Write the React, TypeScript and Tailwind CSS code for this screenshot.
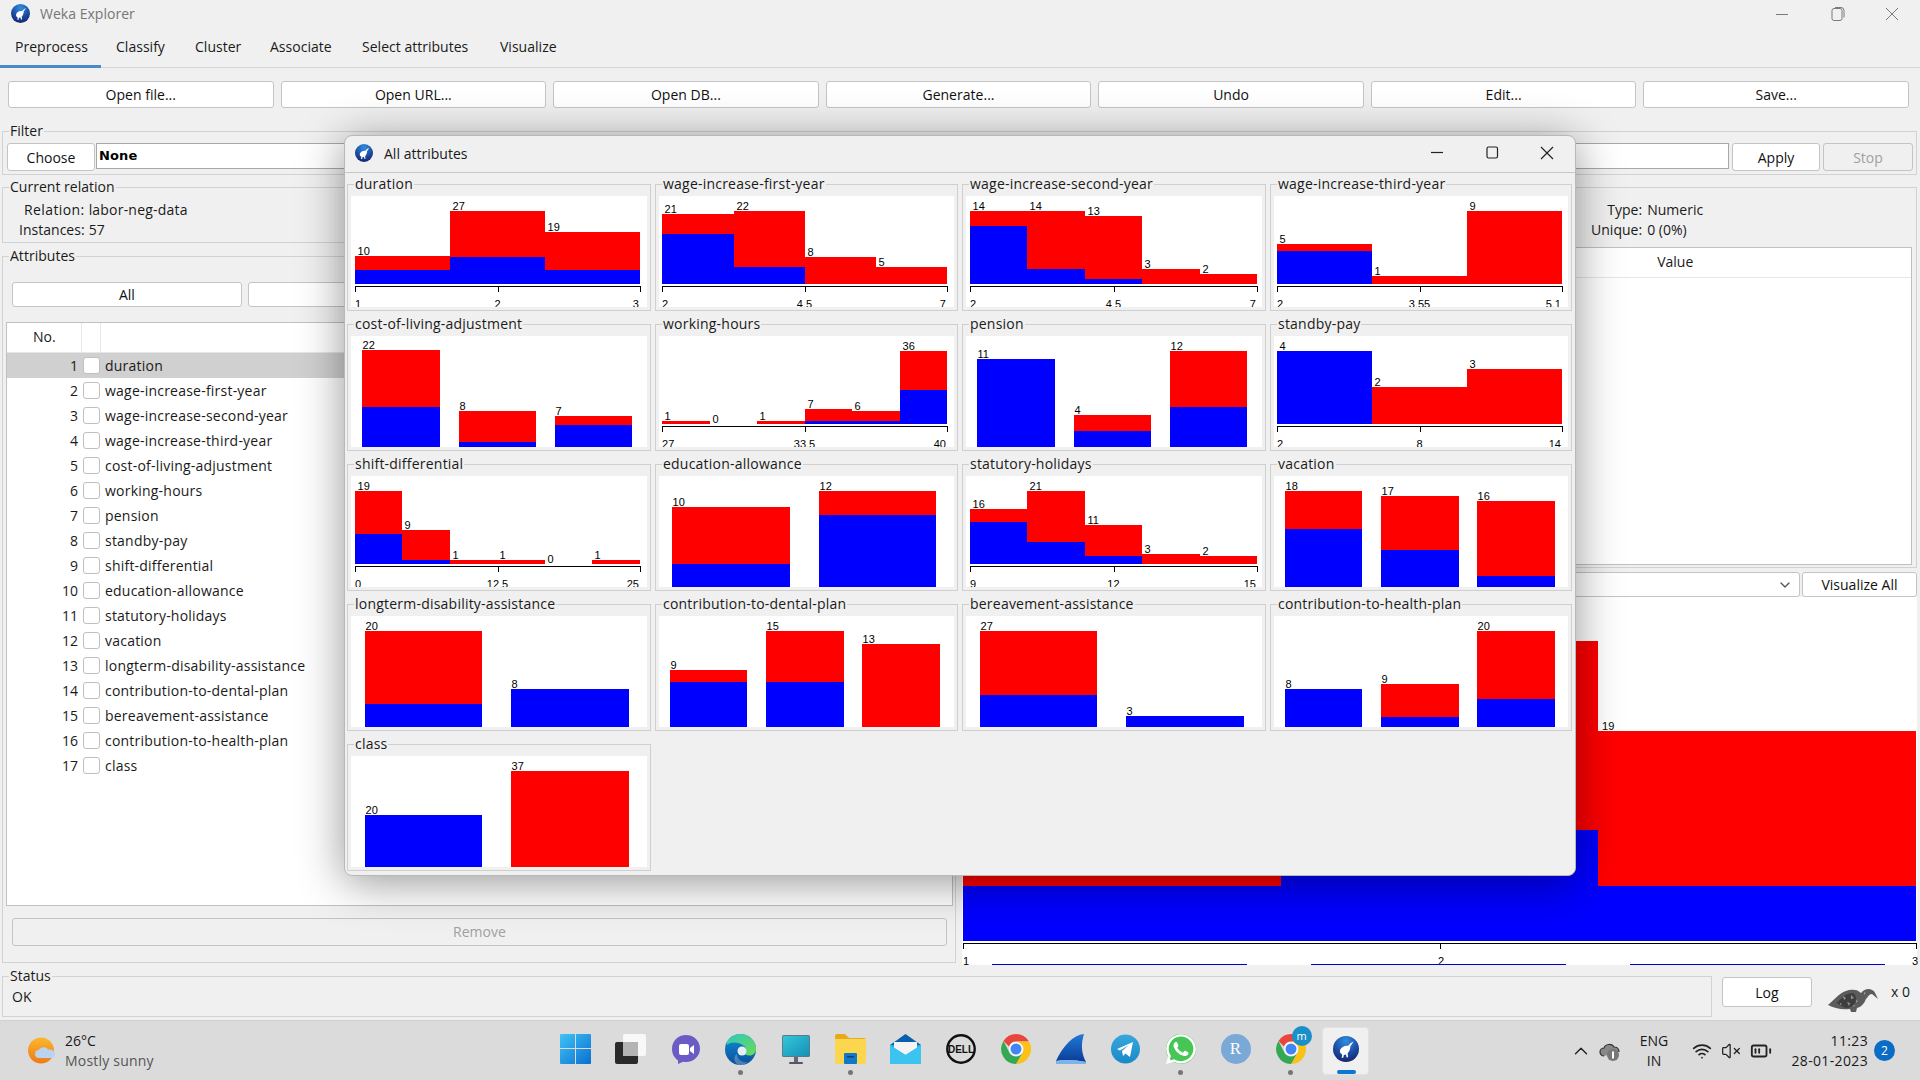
import React from "react";
import { ChevronDown, ChevronUp, Wifi, VolumeX, BatteryMedium } from "lucide-react";
import { FaWhatsapp } from "react-icons/fa";

type Bar = [number, number, number, number | null, string];
type Plot = { name: string; bars: Bar[]; numeric?: string[] };

const plots: Plot[] = [
  { name: "duration", numeric: ["1", "2", "3"], bars: [[4, 99, 60, 74, "10"], [99, 194, 15, 61, "27"], [194, 289, 36, 74, "19"]] },
  { name: "wage-increase-first-year", numeric: ["2", "4.5", "7"], bars: [[3, 75, 18, 38, "21"], [75, 146, 15, 71, "22"], [146, 217, 61, null, "8"], [217, 288, 71, null, "5"]] },
  { name: "wage-increase-second-year", numeric: ["2", "4.5", "7"], bars: [[4, 61, 15, 30, "14"], [61, 119, 15, 73, "14"], [119, 176, 20, 83, "13"], [176, 234, 73, null, "3"], [234, 291, 78, null, "2"]] },
  { name: "wage-increase-third-year", numeric: ["2", "3.55", "5.1"], bars: [[3, 98, 48, 55, "5"], [98, 193, 80, null, "1"], [193, 288, 15, null, "9"]] },
  { name: "cost-of-living-adjustment", bars: [[11, 89, 14, 71, "22"], [108, 185, 75, 106, "8"], [204, 281, 80, 89, "7"]] },
  { name: "working-hours", numeric: ["27", "33.5", "40"], bars: [[3, 51, 85, null, "1"], [51, 98, 88, null, "0"], [98, 146, 85, null, "1"], [146, 193, 73, 85, "7"], [193, 241, 75, 85, "6"], [241, 288, 15, 54, "36"]] },
  { name: "pension", bars: [[11, 89, 23, 23, "11"], [108, 185, 79, 95, "4"], [204, 281, 15, 71, "12"]] },
  { name: "standby-pay", numeric: ["2", "8", "14"], bars: [[3, 98, 15, 15, "4"], [98, 193, 51, null, "2"], [193, 288, 33, null, "3"]] },
  { name: "shift-differential", numeric: ["0", "12.5", "25"], bars: [[4, 51, 15, 58, "19"], [51, 99, 54, 84, "9"], [99, 146, 84, null, "1"], [146, 194, 84, null, "1"], [194, 241, 88, null, "0"], [241, 289, 84, null, "1"]] },
  { name: "education-allowance", bars: [[13, 131, 31, 88, "10"], [160, 277, 15, 39, "12"]] },
  { name: "statutory-holidays", numeric: ["9", "12", "15"], bars: [[4, 61, 33, 46, "16"], [61, 119, 15, 66, "21"], [119, 176, 49, 80, "11"], [176, 234, 78, null, "3"], [234, 291, 80, null, "2"]] },
  { name: "vacation", bars: [[11, 88, 15, 53, "18"], [107, 185, 20, 74, "17"], [203, 281, 25, 100, "16"]] },
  { name: "longterm-disability-assistance", bars: [[14, 131, 15, 88, "20"], [160, 278, 73, 73, "8"]] },
  { name: "contribution-to-dental-plan", bars: [[11, 88, 54, 66, "9"], [107, 185, 15, 66, "15"], [203, 281, 28, null, "13"]] },
  { name: "bereavement-assistance", bars: [[14, 131, 15, 79, "27"], [160, 278, 100, 100, "3"]] },
  { name: "contribution-to-health-plan", bars: [[11, 88, 73, 73, "8"], [107, 185, 68, 101, "9"], [203, 281, 15, 83, "20"]] },
  { name: "class", bars: [[14, 131, 59, 59, "20"], [160, 278, 15, null, "37"]] },
];

const attrs = plots.map((p) => p.name);

function PlotSvg({ plot }: { plot: Plot }) {
  const numeric = !!plot.numeric;
  const base = numeric ? 88 : 111;
  const x0 = plot.bars[0][0];
  const x1 = plot.bars[plot.bars.length - 1][1];
  const mid = (x0 + x1) / 2;
  return (
    <svg width="296" height="111" viewBox="0 0 296 111" fontFamily="'Liberation Sans', sans-serif" fontSize="11" className="block">
      {plot.bars.map(([a, b, top, blue, label], i) => (
        <g key={i}>
          {top < base && <rect x={a} y={top} width={b - a} height={base - top} fill="#ff0000" />}
          {blue !== null && <rect x={a} y={blue} width={b - a} height={base - blue} fill="#0000ff" />}
          <text x={a + (numeric ? 2.5 : 0.5)} y={top - 1} fill="#000">{label}</text>
        </g>
      ))}
      {numeric && (
        <g fill="#000">
          <rect x={x0} y={90} width={x1 - x0 + 1} height={1} />
          <rect x={x0} y={90} width={1} height={6} />
          <rect x={Math.round(mid)} y={90} width={1} height={6} />
          <rect x={x1} y={90} width={1} height={6} />
          <text x={x0} y={112}>{plot.numeric![0]}</text>
          <text x={mid} y={112} textAnchor="middle">{plot.numeric![1]}</text>
          <text x={x1 - 1} y={112} textAnchor="end">{plot.numeric![2]}</text>
        </g>
      )}
    </svg>
  );
}

function Group({ label, className, children }: { label: string; className: string; children?: React.ReactNode }) {
  return (
    <div className={"relative border border-[#d2d2d2] " + className}>
      <span className="absolute left-[6px] top-[-10px] whitespace-nowrap bg-[#f0f0f0] px-[1px] text-[14px] leading-[18px] text-[#1a1a1a]">{label}</span>
      {children}
    </div>
  );
}

function Btn({ children, className, disabled }: { children: React.ReactNode; className: string; disabled?: boolean }) {
  return (
    <div className={(disabled ? "bg-[#f0f0f0] text-[#a0a0a0] " : "bg-white text-[#111] ") + "flex items-center justify-center rounded-[3px] border border-[#c4c4c4] text-[14px] " + className}>
      {children}
    </div>
  );
}

function WekaIcon({ size }: { size: number }) {
  return (
    <svg width={size} height={size} viewBox="0 0 24 24">
      <defs>
        <radialGradient id="wk" cx="0.5" cy="0.2" r="0.9">
          <stop offset="0" stopColor="#2f8fe0" />
          <stop offset="0.55" stopColor="#1a4aa0" />
          <stop offset="1" stopColor="#141a5c" />
        </radialGradient>
      </defs>
      <circle cx="12" cy="12" r="12" fill="url(#wk)" />
      <path d="M19 5 C16.5 6 15 7.500 14 9 C11 8.500 7.500 10 6.500 13 C6 15 7 16.500 8.500 17 L8 20 L9.500 20 L10 17.500 L12 17 L12.500 19.500 L14 19.500 L13.500 16 C15.500 14 16 11.500 16 9.500 C17 8 18 6.500 19 5 Z" fill="#fff" />
    </svg>
  );
}

function WinLogo() {
  return (
    <svg width="31" height="30" viewBox="0 0 31 30">
      <defs>
        <linearGradient id="wl" x1="0" y1="0" x2="1" y2="1">
          <stop offset="0" stopColor="#3fc4f5" />
          <stop offset="1" stopColor="#0a6fd0" />
        </linearGradient>
      </defs>
      <path d="M1 0h14v14H0V1a1 1 0 0 1 1-1zM16 0h14a1 1 0 0 1 1 1v13H16zM0 15h15v15H1a1 1 0 0 1-1-1zM16 15h15v14a1 1 0 0 1-1 1H16z" fill="url(#wl)" />
    </svg>
  );
}

function CopyIcon() {
  return (
    <svg width="31" height="30" viewBox="0 0 31 30">
      <rect x="8" y="0" width="23" height="22" rx="2" fill="#f8f8f8" />
      <rect x="0" y="8" width="23" height="22" rx="2" fill="#2a2a2a" />
      <rect x="8" y="8" width="15" height="14" fill="#b4b4b4" />
    </svg>
  );
}

function MeetIcon() {
  return (
    <svg width="30" height="30" viewBox="0 0 30 30">
      <path d="M15 1C7 1 1 7 1 15c0 5 2.500 9 6 11.500V30l5-2.200c1 .2 2 .2 3 .2 8 0 14-6 14-13.500S23 1 15 1z" fill="#6b5bc4" />
      <rect x="8" y="10" width="10" height="11" rx="2" fill="#fff" />
      <path d="M19 14l4-3v9l-4-3z" fill="#fff" />
    </svg>
  );
}

function EdgeIcon() {
  return (
    <svg width="31" height="31" viewBox="0 0 31 31">
      <defs>
        <linearGradient id="eg" x1="0" y1="0" x2="1" y2="1">
          <stop offset="0" stopColor="#2fc8c0" />
          <stop offset="1" stopColor="#6ddc50" />
        </linearGradient>
        <linearGradient id="eb" x1="0" y1="0" x2="0" y2="1">
          <stop offset="0" stopColor="#0f8fd8" />
          <stop offset="1" stopColor="#0b4f9c" />
        </linearGradient>
      </defs>
      <circle cx="15.500" cy="15.500" r="15.500" fill="url(#eb)" />
      <path d="M2 8C5 2 10 0 15.500 0 24 0 31 7 31 15c0 4-3 6.500-6.500 6.500-3 0-5-1-5.500-2.500 3-1.500 3-5-.5-7.500C14 8 6 7 2 11z" fill="url(#eg)" />
      <path d="M12 20c0 5 4 9 11 8-3 2.500-6 3-8 3-4 0-7-5-5-9 .5-1 1-1.500 2-2z" fill="#fff" opacity="0.25" />
      <circle cx="17" cy="17" r="4.500" fill="#e6eef6" />
    </svg>
  );
}

function MonitorIcon() {
  return (
    <svg width="28" height="31" viewBox="0 0 28 31">
      <defs>
        <linearGradient id="mo" x1="0" y1="0" x2="1" y2="1">
          <stop offset="0" stopColor="#35c6d8" />
          <stop offset="1" stopColor="#1590b8" />
        </linearGradient>
      </defs>
      <rect x="0" y="1" width="28" height="22" rx="1.500" fill="#5d7a8c" />
      <rect x="1" y="2" width="26" height="20" fill="url(#mo)" />
      <rect x="12" y="23" width="4" height="5" fill="#667" />
      <rect x="7" y="28" width="14" height="2" rx="1" fill="#556" />
    </svg>
  );
}

function FolderIcon() {
  return (
    <svg width="31" height="30" viewBox="0 0 31 30">
      <path d="M0 2a2 2 0 0 1 2-2h8l4 4h15a2 2 0 0 1 2 2v3H0z" fill="#e8a91a" />
      <path d="M0 5h31v23a2 2 0 0 1-2 2H2a2 2 0 0 1-2-2z" fill="#fcd64e" />
      <rect x="9" y="19" width="13" height="11" rx="1" fill="#0f78c8" />
      <rect x="12" y="22" width="7" height="1.500" fill="#0a3f78" />
    </svg>
  );
}

function MailIcon() {
  return (
    <svg width="31" height="30" viewBox="0 0 31 30">
      <path d="M15.500 0L31 11v19H0V11z" fill="#0a5fb0" />
      <rect x="0" y="11" width="31" height="19" fill="#28a8ea" />
      <path d="M4 8h23v6L15.500 21 4 14z" fill="#f4f4f4" />
      <path d="M0 11l15.500 10L31 11v19H0z" fill="#3cc4f0" />
    </svg>
  );
}

function DellIcon() {
  return (
    <svg width="30" height="30" viewBox="0 0 30 30" fontFamily="'Liberation Sans', sans-serif">
      <circle cx="15" cy="15" r="13.700" fill="none" stroke="#111" strokeWidth="2.400" />
      <text x="15" y="18.500" fontSize="10" fontWeight="700" textAnchor="middle" fill="#111">DELL</text>
    </svg>
  );
}

function ChromeIcon() {
  return (
    <svg width="30" height="30" viewBox="0 0 30 30">
      <path d="M15 0a15 15 0 0 1 13 7.500H15a7.500 7.500 0 0 0-7 5L2.500 7A15 15 0 0 1 15 0z" fill="#e8453c" />
      <path d="M28 7.500A15 15 0 0 1 15 30l6.500-11.250A7.500 7.500 0 0 0 21.500 11 L15 7.500z" fill="#fbc116" />
      <path d="M2.500 7L8.500 18.750a7.500 7.500 0 0 0 13 0L15 30A15 15 0 0 1 2.500 7z" fill="#34a853" />
      <circle cx="15" cy="15" r="7" fill="#fff" />
      <circle cx="15" cy="15" r="5.500" fill="#4285f4" />
    </svg>
  );
}

function SharkIcon() {
  return (
    <svg width="30" height="30" viewBox="0 0 30 30">
      <defs>
        <linearGradient id="sh" x1="0" y1="0" x2="0" y2="1">
          <stop offset="0" stopColor="#1f7ad8" />
          <stop offset="1" stopColor="#0b3c98" />
        </linearGradient>
      </defs>
      <path d="M28 0C17 1 7 12 0 27c9-2 20-1 30 1C25 19 25 9 28 0z" fill="url(#sh)" />
      <path d="M0 27c9-2 20-1 30 1v2H0z" fill="#7ab4e8" />
    </svg>
  );
}

function TelegramIcon() {
  return (
    <svg width="29" height="30" viewBox="0 0 29 30">
      <defs>
        <linearGradient id="tg" x1="0.5" y1="0" x2="0.5" y2="1">
          <stop offset="0" stopColor="#36a8dc" />
          <stop offset="1" stopColor="#1a88c8" />
        </linearGradient>
      </defs>
      <circle cx="14.500" cy="15" r="14.500" fill="url(#tg)" />
      <path d="M6 15l16-7-3 15-4.500-3.500-2.500 2.500-1-5 7-6-9 5.500z" fill="#fff" />
    </svg>
  );
}

function WhatsIcon() {
  return (
    <div className="relative flex h-[30px] w-[30px] items-center justify-center rounded-full bg-[#45c655]">
      <FaWhatsapp size={34} color="#fff" className="absolute" />
    </div>
  );
}

function RIcon() {
  return (
    <div className="flex h-[30px] w-[30px] items-center justify-center rounded-full bg-[#7aa9d8] font-['Liberation_Serif',serif] text-[17px] text-white">R</div>
  );
}

function Kiwi() {
  return (
    <svg width="56" height="26" viewBox="0 0 56 26">
      <path d="M1 18C8 12 13 5 22 3c6-1 9 0 12 3 3-4 8-5 11-3 3 1 4 5 6 9l-6-5c-3 0-4 3-6 5-2 5-5 8-9 9l-1 4-5 0-1-3C14 23 7 21 1 18z" fill="#5c5c5c" />
      <path d="M10 16c5-6 10-10 16-10 3 2 4 6 2 10-2 3-5 5-9 5-3-1-6-3-9-5z" fill="#3e3e3e" />
      <path d="M16 9l3 2-2 2zM24 8l3 3-3 1zM20 15l3 1-1 3zM29 13l2 1-2 2zM13 16l2 1-2 1zM37 5l2 1-2 2zM26 18l2 0-1 2z" fill="#969696" />
    </svg>
  );
}

function WeatherIcon() {
  return (
    <svg width="28" height="27" viewBox="0 0 28 27">
      <defs>
        <linearGradient id="su" x1="0" y1="0" x2="0" y2="1">
          <stop offset="0" stopColor="#fbb72c" />
          <stop offset="1" stopColor="#ee7a18" />
        </linearGradient>
      </defs>
      <circle cx="13" cy="13.500" r="13" fill="url(#su)" />
      <path d="M11 21a4 4 0 0 1 0-8c1-3 7-4 9-.5 4-.5 7 1.500 7 4.500s-2 4-4 4z" fill="#b9d3f0" />
    </svg>
  );
}

function TaskItem({ children, dot, active }: { children: React.ReactNode; dot?: boolean; active?: boolean }) {
  return (
    <div className="relative flex h-[60px] w-[55px] shrink-0 items-center justify-center pb-[3px]">
      {active && (
        <div className="absolute left-[4px] top-[6px] h-[48px] w-[47px] rounded-[4px] border border-[#e2e2e2] bg-[#f0f0f0]">
          <div className="absolute bottom-[0px] left-[14px] h-[4px] w-[19px] rounded-[2px] bg-[#0a78d4]" />
        </div>
      )}
      <div className="relative">{children}</div>
      {dot && <div className="absolute bottom-[6px] left-[25px] h-[5px] w-[5px] rounded-full bg-[#767676]" />}
    </div>
  );
}

export default function App() {
  return (
    <div className="relative flex h-[1080px] w-[1920px] flex-col overflow-hidden bg-[#f0f0f0] font-['Open_Sans',sans-serif] text-[14px] tracking-[0.02px] text-[#1a1a1a]">
      {/* Main title bar */}
      <div className="flex h-[30px] items-center pb-[3px] pl-[11px]">
        <WekaIcon size={19} />
        <span className="ml-[10px] text-[#767676]">Weka Explorer</span>
        <svg width="145" height="20" viewBox="0 0 145 20" fill="none" stroke="#7a7a7a" strokeWidth="1" className="ml-auto mr-[1px]">
          <path d="M2 10.500h12" />
          <path d="M58 7.500v8a2 2 0 0 0 2 2h6a2 2 0 0 0 2-2v-8a2 2 0 0 0-2-2h-6a2 2 0 0 0-2 2z" transform="translate(0 -1)" />
          <path d="M61 3.500h6a3 3 0 0 1 3 3v7" />
          <path d="M112 4l12 12M124 4l-12 12" />
        </svg>
      </div>

      {/* Tabs */}
      <div className="relative flex h-[38px] items-center border-b border-[#d6d6d6] pb-[4px] pl-[15px]">
        <span className="absolute bottom-[-1px] left-0 h-[3px] w-[101px] bg-[#4a8ac8]" />
        <span className="w-[101px] shrink-0">Preprocess</span>
        <span className="w-[79px] shrink-0">Classify</span>
        <span className="w-[75px] shrink-0">Cluster</span>
        <span className="w-[92px] shrink-0">Associate</span>
        <span className="w-[138px] shrink-0 whitespace-nowrap">Select attributes</span>
        <span className="shrink-0">Visualize</span>
      </div>

      {/* Top buttons */}
      <div className="mt-[13px] grid grid-cols-7 gap-[7px] pl-[8px] pr-[11px]">
        {["Open file...", "Open URL...", "Open DB...", "Generate...", "Undo", "Edit...", "Save..."].map((b) => (
          <Btn key={b} className="h-[27px]">{b}</Btn>
        ))}
      </div>

      {/* Filter */}
      <Group label="Filter" className="ml-[2px] mr-[3px] mt-[23px] h-[44px]">
        <div className="flex pl-[4px] pr-[3px] pt-[11px]">
          <Btn className="h-[28px] w-[88px] shrink-0">Choose</Btn>
          <div className="ml-[1px] h-[26px] flex-1 border border-[#a8a8a8] bg-white pl-[2px] font-['DejaVu_Sans',sans-serif] text-[13px] font-bold leading-[23px] tracking-[0.15px] text-black">None</div>
          <Btn className="ml-[3px] h-[28px] w-[88px] shrink-0">Apply</Btn>
          <Btn disabled className="ml-[3px] h-[28px] w-[90px] shrink-0">Stop</Btn>
        </div>
      </Group>

      {/* Two columns */}
      <div className="mt-[12px] flex pl-[2px]">
        <div className="w-[954px] shrink-0">
          <Group label="Current relation" className="h-[56px]">
            <div className="grid grid-cols-[auto_1fr] gap-x-[4px] pl-[16px] pt-[12px] leading-[20px]">
              <span className="text-right tracking-[0.4px]">Relation:</span><span className="tracking-[0.2px]">labor-neg-data</span>
              <span className="text-right">Instances:</span><span>57</span>
            </div>
          </Group>
          <Group label="Attributes" className="mt-[13px] h-[707px]">
            <div className="grid grid-cols-4 gap-[6px] pl-[9px] pr-[6px] pt-[25px]">
              {["All", "None", "Invert", "Pattern"].map((b) => (
                <Btn key={b} className="h-[25px]">{b}</Btn>
              ))}
            </div>
            <div className="ml-[3px] mr-[2px] mt-[15px] h-[584px] overflow-hidden border border-[#c0c0c0] bg-white">
              <div className="flex h-[30px] border-b border-[#e6e6e6]">
                <div className="w-[75px] border-r border-[#e6e6e6] pl-[26px] leading-[28px]">No.</div>
                <div className="w-[19px] border-r border-[#e6e6e6]" />
              </div>
              {attrs.map((a, i) => (
                <div key={a} className={(i === 0 ? "bg-[#d0d0d0] " : "") + "flex h-[25px] items-center"}>
                  <span className="w-[71px] text-right">{i + 1}</span>
                  <span className="ml-[5px] h-[17px] w-[17px] rounded-[3px] border border-[#c0c0c0] bg-white" />
                  <span className="ml-[5px] whitespace-nowrap tracking-[0.22px]">{a}</span>
                </div>
              ))}
            </div>
            <Btn disabled className="ml-[9px] mr-[8px] mt-[12px] h-[28px] pb-[2px]">Remove</Btn>
          </Group>
        </div>

        <div className="ml-[6px] flex w-[955px] shrink-0 flex-col">
          <Group label="Selected attribute" className="h-[381px]">
            <div className="ml-[628px] grid grid-cols-[auto_1fr] gap-x-[5px] pt-[12px] leading-[20px]">
              <span className="text-right">Type:</span><span>Numeric</span>
              <span className="text-right">Unique:</span><span>0 (0%)</span>
            </div>
            <div className="ml-[4px] mr-[4px] mt-[7px] h-[318px] border border-[#c0c0c0] bg-white">
              <div className="grid h-[30px] grid-cols-2 border-b border-[#e6e6e6] text-center leading-[28px]">
                <span>Statistic</span>
                <span>Value</span>
              </div>
            </div>
          </Group>
          <div className="mt-[4px] flex h-[25px]">
            <div className="flex flex-1 items-center justify-between rounded-[3px] border border-[#c4c4c4] bg-white px-[6px]">
              <span>Class: class (Nom)</span>
              <ChevronDown size={16} color="#555" />
            </div>
            <Btn className="ml-[2px] w-[115px] shrink-0">Visualize All</Btn>
          </div>
          <div className="h-[368px] bg-white">
            <svg width="956" height="368" viewBox="0 0 956 368" fontFamily="'Liberation Sans', sans-serif" fontSize="11" className="block">
              <rect x="1" y="233" width="318" height="111" fill="#ff0000" />
              <rect x="1" y="289" width="318" height="55" fill="#0000ff" />
              <rect x="319" y="44" width="317" height="300" fill="#ff0000" />
              <rect x="319" y="233" width="317" height="111" fill="#0000ff" />
              <rect x="636" y="134" width="318" height="210" fill="#ff0000" />
              <rect x="636" y="289" width="318" height="55" fill="#0000ff" />
              <text x="4" y="232">10</text>
              <text x="322" y="43">27</text>
              <text x="640" y="133">19</text>
              <rect x="1" y="346" width="954" height="1" fill="#000" />
              <rect x="1" y="346" width="1" height="6" fill="#000" />
              <rect x="478" y="346" width="1" height="6" fill="#000" />
              <rect x="954" y="346" width="1" height="6" fill="#000" />
              <text x="1" y="368">1</text>
              <text x="476" y="368">2</text>
              <text x="950" y="368">3</text>
              <rect x="30" y="367" width="255" height="1" fill="#0000cc" />
              <rect x="349" y="367" width="255" height="1" fill="#0000cc" />
              <rect x="668" y="367" width="255" height="1" fill="#0000cc" />
            </svg>
          </div>
        </div>
      </div>

      {/* Status */}
      <div className="mt-[11px] flex h-[41px] pl-[2px]">
        <Group label="Status" className="w-[1710px] shrink-0">
          <div className="pl-[9px] pt-[10px] leading-[20px]">OK</div>
        </Group>
        <Btn className="ml-[10px] mt-[1px] h-[30px] w-[90px] shrink-0">Log</Btn>
        <div className="ml-[15px] mt-[11px] shrink-0"><Kiwi /></div>
        <span className="ml-[8px] mt-[5px] shrink-0">x 0</span>
      </div>

      {/* Taskbar */}
      <div className="mt-[3px] flex h-[60px] shrink-0 items-center border-t border-[#d0d0d0] bg-[#dbdbdb]">
        <div className="flex w-[548px] shrink-0 items-center pl-[28px]">
          <WeatherIcon />
          <div className="ml-[9px] leading-[20px]">
            <div>26°C</div>
            <div className="tracking-[0.2px] text-[#555]">Mostly sunny</div>
          </div>
        </div>
        <TaskItem><WinLogo /></TaskItem>
        <TaskItem><CopyIcon /></TaskItem>
        <TaskItem><MeetIcon /></TaskItem>
        <TaskItem dot><EdgeIcon /></TaskItem>
        <TaskItem><MonitorIcon /></TaskItem>
        <TaskItem dot><FolderIcon /></TaskItem>
        <TaskItem><MailIcon /></TaskItem>
        <TaskItem><DellIcon /></TaskItem>
        <TaskItem><ChromeIcon /></TaskItem>
        <TaskItem><SharkIcon /></TaskItem>
        <TaskItem><TelegramIcon /></TaskItem>
        <TaskItem dot><WhatsIcon /></TaskItem>
        <TaskItem><RIcon /></TaskItem>
        <TaskItem dot>
          <ChromeIcon />
          <span className="absolute right-[-6px] top-[-8px] flex h-[20px] w-[20px] items-center justify-center rounded-full bg-[#1a8fc8] text-[11px] text-white">m</span>
        </TaskItem>
        <TaskItem active><WekaIcon size={26} /></TaskItem>

        <div className="ml-[199px] flex items-center">
          <ChevronUp size={22} color="#222" strokeWidth={1.500} className="ml-[-2px]" />
          <svg width="22" height="22" viewBox="0 0 22 22" className="ml-[7px]">
            <path d="M5 16a4 4 0 0 1 0-8c1-4 8-5 10-1 3 0 5 2 5 5" fill="#888" stroke="#333" strokeWidth="1.200" />
            <circle cx="14" cy="15" r="6" fill="#777" />
            <rect x="13" y="11.500" width="2" height="7" fill="#fff" />
          </svg>
          <div className="ml-[17px] w-[32px] text-center leading-[20px]">
            <div>ENG</div>
            <div>IN</div>
          </div>
          <Wifi size={20} color="#222" className="ml-[22px]" />
          <VolumeX size={20} color="#222" strokeWidth={1.500} className="ml-[9px]" />
          <BatteryMedium size={22} color="#222" className="ml-[9px]" />
          <div className="ml-[18px] w-[78px] whitespace-nowrap text-right leading-[20px] tracking-[0.35px]">
            <div>11:23</div>
            <div>28-01-2023</div>
          </div>
          <span className="ml-[6px] flex h-[21px] w-[21px] items-center justify-center rounded-full bg-[#0a6cc4] text-[12px] text-white">2</span>
        </div>
      </div>

      {/* All attributes window */}
      <div className="absolute left-[344px] top-[135px] h-[741px] w-[1232px] rounded-[8px] border border-[#b8b8b8] bg-[#f0f0f0] shadow-[0_6px_45px_rgba(0,0,0,0.42)]">
        <div className="flex h-[37px] items-center border-b border-[#c8c8c8] pb-[2px] pl-[10px]">
          <WekaIcon size={18} />
          <span className="ml-[11px]">All attributes</span>
          <svg width="123" height="20" viewBox="0 0 123 20" fill="none" stroke="#222" strokeWidth="1.200" className="ml-auto mr-[21px]">
            <path d="M0 9.500h12" />
            <rect x="56" y="4" width="10.500" height="11" rx="1.500" />
            <path d="M110 4l12 12M122 4l-12 12" />
          </svg>
        </div>
        <div className="grid grid-cols-[304px_303px_304px_302px] gap-x-[4px] gap-y-[13px] pl-[2px] pt-[11px]">
          {plots.map((p) => (
            <div key={p.name} className="relative border border-[#cfcfcf] px-[3px] pb-[3px] pt-[11px]">
              <span className="absolute left-[6px] top-[-10px] whitespace-nowrap bg-[#f0f0f0] px-[1px] leading-[18px] tracking-[0.22px]">{p.name}</span>
              <div className="h-[111px] overflow-hidden bg-white">
                <PlotSvg plot={p} />
              </div>
            </div>
          ))}
        </div>
      </div>
    </div>
  );
}
